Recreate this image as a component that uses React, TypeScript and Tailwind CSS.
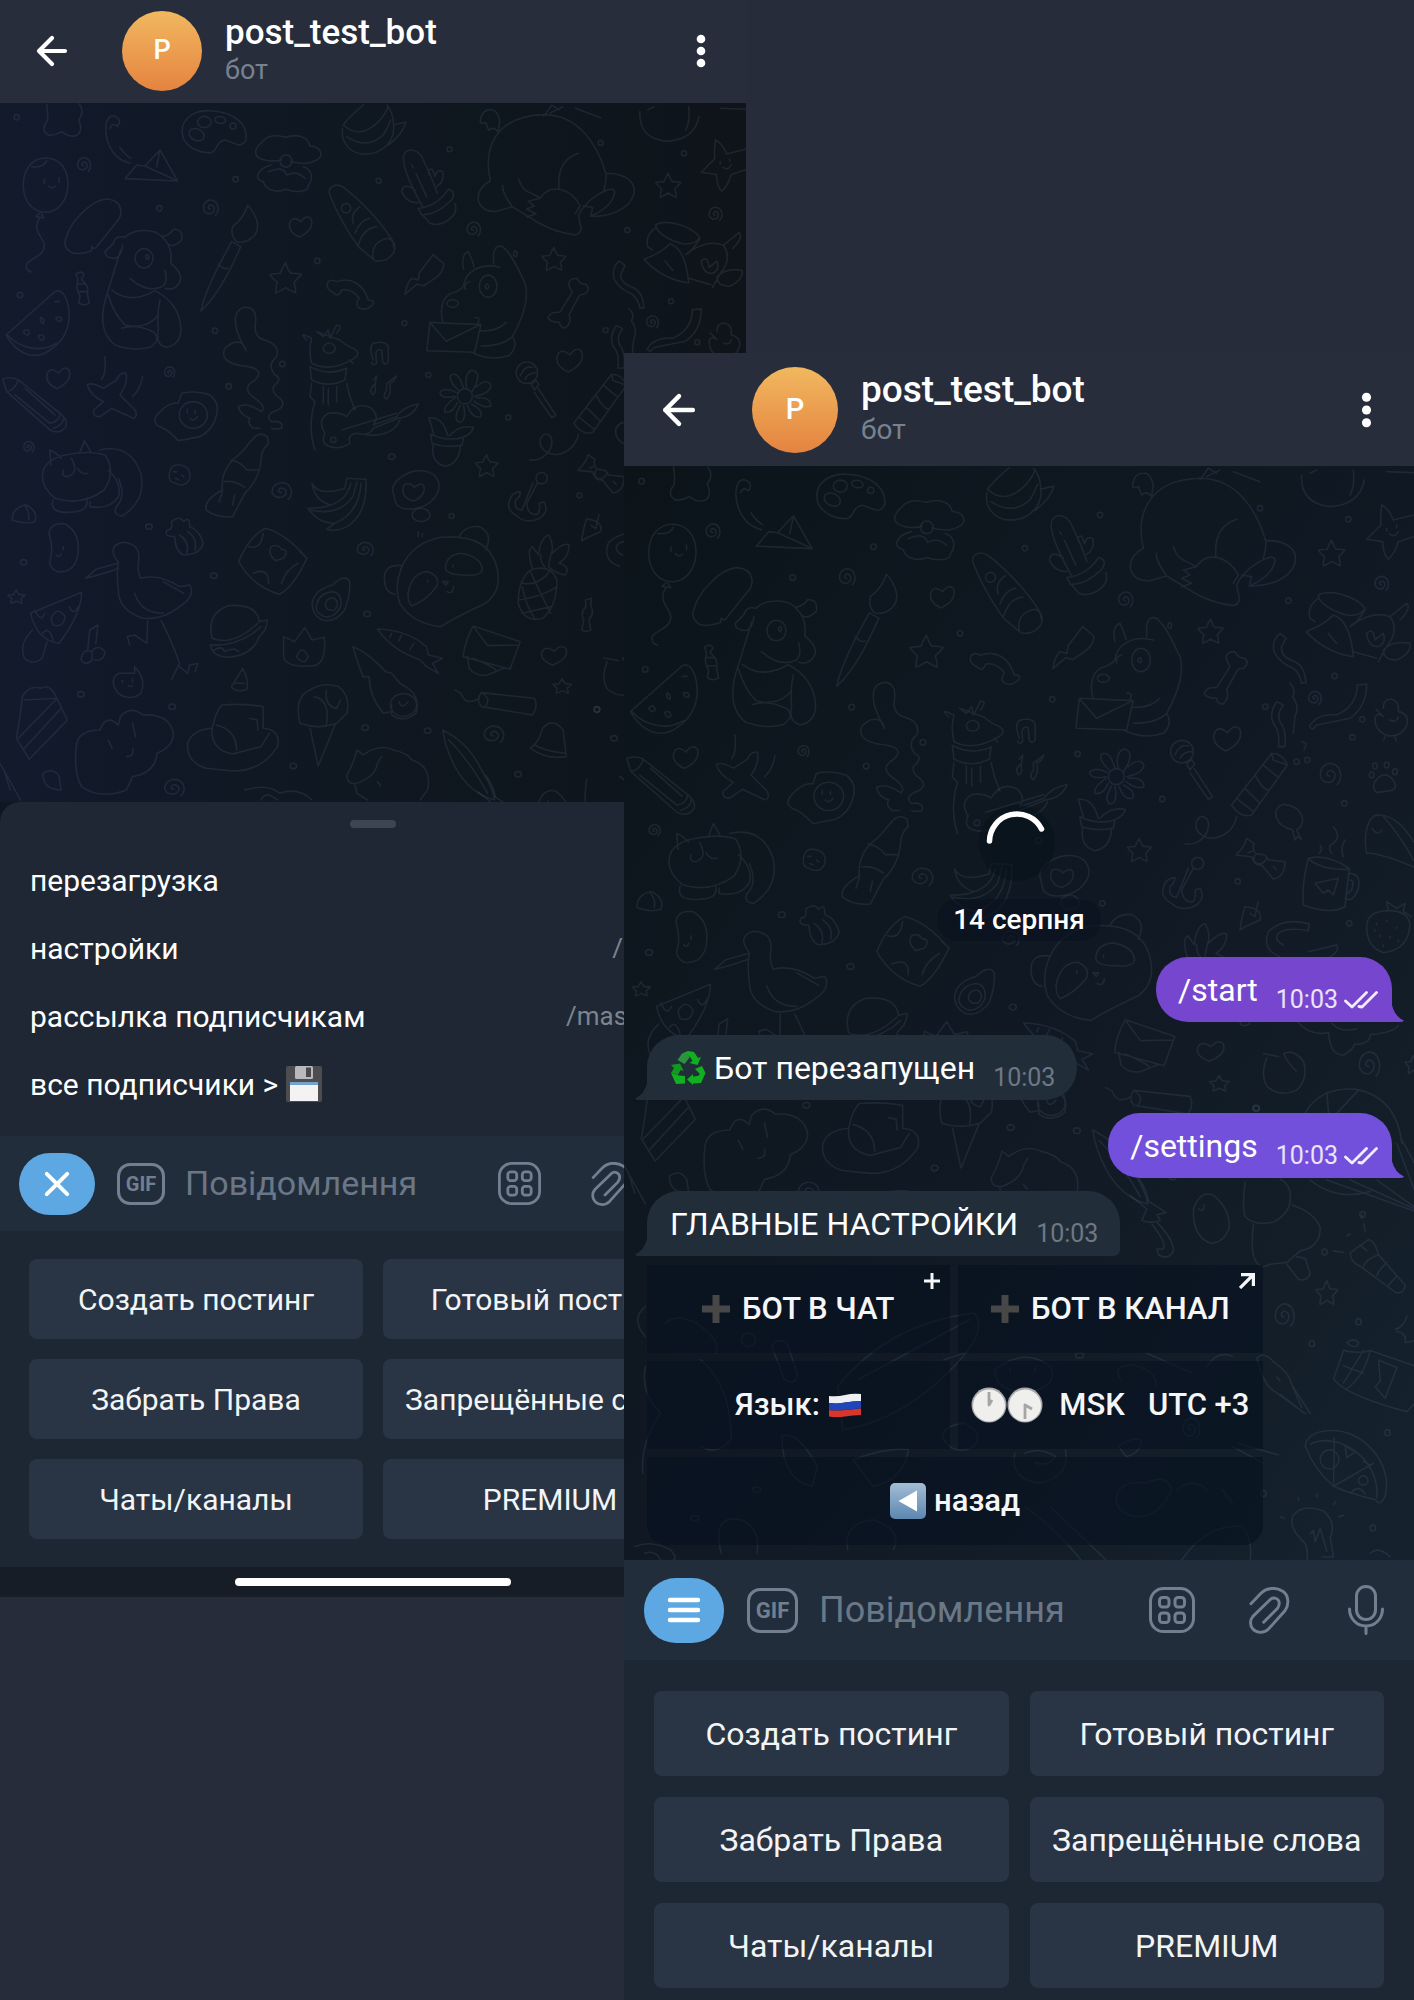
import React from "react";

type Size = "compact" | "large";

/* ---------- wallpaper ---------- */

type Spot = [number, number, number];

const STAR = "M0-1 Q.16-.5.32-.36 Q.7-.38.95-.3 Q.7 0 .5.18 Q.62.5.6.82 Q.25.66 0 .5 Q-.3.72-.6.82 Q-.6.45-.5.18 Q-.8-.05-.95-.3 Q-.6-.34-.32-.36 Q-.2-.7 0-1Z";
const HEART = "M-.1.95 Q-1.1.5-.95-.25 Q-.7-.95.02-.35 Q.5-1.05.9-.6 Q1.2.3-.1.95Z";
const SPIRAL = "M.05.1 Q-.3.05-.15-.25 Q.15-.55.45-.15 Q.6.35.1.6 Q-.55.7-.75.1 Q-.8-.7-.05-.95 Q.85-1 .95 0 Q.95.5.65.8";

function Shapes({ d, spots }: { d: string; spots: Spot[] }) {
  return (
    <>
      {spots.map(([x, y, r], i) => (
        <path key={i} d={d} transform={`translate(${x} ${y}) scale(${r})`} />
      ))}
    </>
  );
}

function Dots({ at }: { at: [number, number][] }) {
  return (
    <>
      {at.map(([x, y], i) => (
        <circle key={i} cx={x} cy={y} r={8} />
      ))}
    </>
  );
}

function Lines({ d }: { d: string[] }) {
  return (
    <>
      {d.map((p, i) => (
        <path key={i} d={p} />
      ))}
    </>
  );
}

const TOP_LEFT = [
  // puppy patch, balloon
  "M140 12 Q145 40 142 62 Q120 90 145 105 Q165 108 185 95 Q210 115 232 105 Q250 90 236 60 Q255 35 238 12",
  "M137 174 C180 174 205 210 204 255 C203 300 175 337 137 337 C95 337 70 300 70 255 C70 210 95 174 137 174Z M95 200 Q130 205 140 182 M118 340 l-10 10 l24 4 l-8-14 M118 355 C90 400 145 415 130 450 C120 475 70 480 80 505 Q85 515 95 516 M133 237 v14 M177 233 v14 M146 258 Q158 270 165 258",
  // paper plane
  "M330 85 C335 70 345 72 352 79 C370 60 345 40 328 52 C305 75 315 170 390 190 M375 236 L410 195 L435 198 L480 150 L533 243 Z M435 198 L533 243 M480 150 L470 200 M360 142 Q375 165 393 175",
  // palette
  "M640 33 C570 25 535 70 550 115 C565 145 600 160 632 158 C655 152 645 125 675 120 C700 125 722 150 738 120 C745 70 700 38 640 33Z M593 66 a20 17 0 1 0 40 0 a20 17 0 1 0-40 0 M568 104 a22 16 25 1 0 44 0 a22 16 25 1 0-44 0 M645 60 a16 10 10 1 0 32 0 a16 10 10 1 0-32 0 M690 78 a9 9 0 1 0 18 0 a9 9 0 1 0-18 0",
  // pansy
  "M858 165 a18 18 0 1 0 .1 0 M845 180 C800 190 760 175 768 150 C775 130 785 130 790 122 C810 100 840 108 858 112 C890 100 925 110 930 138 C965 140 975 170 945 182 C925 195 900 190 872 185 M815 195 C770 205 760 240 790 245 C800 275 835 278 858 268 C890 280 925 275 925 258 C945 230 930 205 910 200 M805 215 Q850 195 860 225 Q890 210 915 235",
  // helmet
  "M1090 15 C1060 40 1040 60 1030 75 Q1070 110 1110 85 Q1150 60 1165 20 M1028 85 C1020 135 1060 165 1100 162 C1150 160 1190 120 1180 65 Q1178 35 1160 15 M1040 110 Q1100 150 1150 105 Q1165 80 1172 60 M1180 75 Q1200 70 1218 66 Q1210 100 1165 135",
  // caterpillar pen
  "M990 285 C980 260 1010 245 1035 265 C1080 300 1140 360 1180 425 Q1190 440 1180 460 Q1160 488 1125 482 L1075 440 C1040 390 1010 340 990 285Z M1025 320 a14 14 0 1 0 20-8 a14 14 0 0 0-20 8 M1060 370 Q1050 340 1080 320 M1065 400 Q1080 360 1110 355 M1075 435 Q1090 385 1130 380 M1120 478 Q1110 425 1165 415 Q1185 425 1180 440",
  // cactus
  "M1268 320 C1240 270 1200 190 1213 162 C1225 140 1260 150 1270 180 Q1295 230 1312 280 M1288 225 Q1282 205 1297 208 L1305 230 Q1310 205 1328 215 Q1335 245 1310 260 M1245 270 Q1210 245 1205 275 Q1220 310 1255 308 M1255 325 Q1310 320 1345 268 Q1370 275 1355 300 Q1310 345 1265 345Z M1270 348 L1290 370 Q1315 380 1345 360 Q1375 340 1365 310 M1248 220 L1280 290 M1235 195 l4 8",
  // elephant dog
  "M200 410 C210 370 270 300 320 297 C370 300 370 345 350 365 L290 440 Q285 450 275 440 L275 452 Q240 465 215 458 Q185 440 200 410Z M375 412 C400 385 465 385 485 410 Q520 440 512 490 Q550 520 540 545 Q525 575 495 565 M375 412 Q345 405 340 430 L315 455 Q315 475 345 475 Q365 470 368 435 M362 450 L325 570 C300 640 300 700 345 735 Q400 755 450 742 Q485 720 462 697 Q410 670 365 685 M485 410 Q510 405 520 388 Q550 385 545 420 Q520 445 505 432 M405 475 a27 29 0 1 0 54 0 a27 29 0 1 0-54 0 M437 468 q8-10 10 4 q-6 14-10-4 M390 535 Q440 580 485 560 Q505 550 495 510 M335 570 Q390 615 465 572 Q540 610 543 690 Q540 735 500 742 Q465 735 475 690 Q470 640 480 600 M325 585 Q340 640 375 675 Q440 690 475 645",
  // brush
  "M743 315 C770 345 785 385 760 410 Q735 432 710 425 Q690 405 698 380 Q735 350 743 315Z M695 425 L722 440 C700 490 660 580 603 633 C615 570 660 490 695 425Z M655 492 Q670 510 685 505",
  // candy, watermelon
  "M228 522 q18-12 24 2 l-8 14 Q270 560 262 580 L268 610 Q250 620 236 608 L240 588 Q225 565 234 540Z M234 552 h22 M238 575 h24 M18 705 L165 575 Q185 565 200 600 C220 660 200 720 150 750 C100 785 50 760 18 705Z M22 705 C60 745 120 760 170 730 M122 652 q12 4 8 18 q-12-2-8-18 M70 695 q16-15 18 6 q-10 10-18-6 M115 708 q14-10 18 8 q-10 14-18-8 M168 652 q20-4 16 10 q-14 6-16-10 M165 605 h14",
  // curved bone
  "M983 548 Q990 535 1010 545 C1050 530 1090 550 1105 600 Q1130 600 1115 618 Q1095 635 1075 622 Q1065 610 1078 595 Q1055 565 1025 570 Q1015 595 1000 578 Q975 565 983 548Z",
  // bolt
  "M1300 464 L1332 492 Q1330 520 1300 538 L1270 558 L1252 552 L1215 583 Q1220 550 1235 535 L1255 540 L1258 518 Z",
  // ribbon
  "M738 752 Q720 720 710 690 Q695 625 740 622 Q775 625 765 680 Q765 715 800 722 Q840 735 830 770 Q800 795 825 825 Q850 835 820 860 Q815 880 840 895 Q865 920 820 935 Q795 950 815 965 Q850 960 845 985 Q830 990 815 985 M738 752 Q730 720 700 728 Q660 745 675 775 Q690 795 745 800 Q795 810 765 840 Q720 865 765 895 Q800 920 785 935 Q740 905 715 920 Q720 945 750 955 M750 955 Q740 970 760 985 L780 985",
  // llama
  "M920 720 Q900 700 915 706 L935 715 Q925 750 935 790 Q985 815 1045 785 Q1090 765 1065 748 Q1035 735 1020 720 L950 695 L970 710 L985 690 L990 715 L1010 675 Q1030 675 1010 700 M930 800 Q985 830 1040 805 L1035 840 Q985 865 935 840Z M935 850 L930 890 L945 905 C925 970 935 1020 945 1050 M1040 850 L1050 890 L1065 930 M970 860 L970 910 M985 865 V915 M1010 860 V905 M970 745 a18 15 0 1 0 36 0 a18 15 0 1 0-36 0 M1050 780 l8 10",
  // guitar
  "M985 940 Q1020 935 1040 950 Q1070 900 1115 925 Q1140 950 1120 975 L1190 950 Q1210 920 1255 912 Q1240 950 1195 955 L1120 985 Q1110 1010 1070 1000 Q1040 1005 1050 1030 Q1020 1050 990 1040 Q960 1030 975 1000 Q950 960 985 940Z M1025 990 L1190 940 M1200 960 Q1180 1010 1100 1005",
  // notes
  "M1120 780 Q1105 740 1120 730 Q1155 720 1165 740 L1165 785 Q1155 800 1148 785 L1145 750 Q1125 745 1128 770 L1130 790Q1120 800 1115 788 M1120 840 l10-12 l-5 30 Q1130 880 1118 884 Q1105 870 1122 855 M1160 850 L1190 828 L1180 845 L1170 850 Q1175 880 1160 898 Q1145 890 1160 870Z",
  // pencil
  "M8 838 Q30 828 55 840 L180 940 Q205 960 198 980 Q180 1005 150 990 L20 875Z M20 875 Q45 870 55 840 M45 885 L150 970 M150 970 Q180 965 180 940 M160 985 Q190 975 190 955 M75 865 L165 945",
  // plane
  "M262 855 Q275 845 310 865 L350 840 Q360 815 378 820 Q385 850 360 885 L405 930 Q415 950 400 955 L335 925 L300 950 Q275 950 282 930 L310 905 Q270 885 262 855Z M305 838 Q320 820 314 770 M398 890 Q420 870 428 830",
  // fried egg
  "M545 880 Q590 870 630 885 Q660 910 650 945 Q640 990 600 1010 Q550 1020 535 1022 Q500 985 478 980 Q450 965 480 935 Q510 905 535 910 Z M538 945 a42 40 0 1 0 84 0 a42 40 0 1 0-84 0 M562 928 v10 M585 930 v10 M570 955 q12 12 22-5",
];

const TOP_RIGHT = [
  // elephant
  "M430 265 C410 180 430 60 600 55 C710 55 770 150 797 242 C860 240 895 270 885 310 C870 360 800 380 748 378 L755 350 L725 345 M430 265 Q385 290 392 330 Q405 365 450 362 L500 348 C480 320 465 290 470 280 M500 348 L545 375 L585 400 Q640 430 700 437 Q725 430 715 400 L710 375 Q725 340 770 310 Q820 280 825 300 Q820 345 755 375 M790 295 Q800 260 797 242 M710 178 Q640 200 648 290 M520 260 Q530 295 560 305 L590 320 Q610 285 655 293 Q695 305 715 345 L700 370 M545 380 L575 370 L545 355 L570 345 L550 330 L590 320 M455 110 L460 75 Q450 35 430 40 Q400 40 398 80 Q410 85 415 80 L425 105 Q440 90 455 110 M600 60 L625 25 L650 40 M620 50 L660 30 M700 35 L780 65",
  // sugar bowl
  "M905 45 Q900 130 990 140 Q1080 135 1093 60 M1060 30 Q1065 80 1050 105 M930 40 l20-10 M1160 35 L1240 38",
  // starfish
  "M1145 135 Q1170 150 1180 180 L1240 165 M1145 135 Q1140 180 1143 195 L1100 238 L1148 245 Q1150 285 1165 298 Q1185 280 1195 245 L1240 230 M1160 205 v8 M1190 195 v8 M1168 222 Q1185 235 1195 215",
  // pot
  "M955 405 C990 385 1070 410 1095 445 Q1080 470 1040 465 C1000 455 955 430 955 405Z M955 415 Q920 440 930 475 L945 485 M1095 450 Q1070 490 1050 500 M918 515 Q980 490 1000 465 Q1050 480 1060 590 Q980 580 918 515Z M1055 495 Q1120 450 1170 470 Q1200 510 1160 560 L1135 605 M1170 470 L1220 430 Q1235 445 1200 480 M1100 520 Q1120 500 1125 540 L1150 520 Q1160 550 1135 560 Q1105 560 1100 520 M1150 570 Q1180 540 1230 550 Q1235 580 1190 600 Q1150 600 1150 570 M985 520 Q1000 540 1010 550 M1060 575 L1130 595",
  // dino with letter
  "M460 540 C405 525 350 550 345 600 Q335 615 300 625 Q265 650 278 712 M440 500 Q445 465 470 475 C500 500 520 550 540 590 C560 660 510 740 500 760 Q470 790 400 790 M345 545 Q335 500 360 490 Q375 520 378 540 M440 500 L440 530 M395 600 a28 35 0 1 0 56 0 a28 35 0 1 0-56 0 M413 600 q8-15 12 2 q-6 14-12-2 M350 610 Q345 590 365 585 M292 655 a18 12 0 1 0 36 0 a18 12 0 1 0-36 0 M238 715 L400 722 L380 810 L228 805 Z M240 718 L290 775 L398 722 M380 700 q20-4 10 20 M400 742 Q450 745 480 715 M500 760 Q520 790 490 820 Q430 840 370 810 M507 488 q12 0 5 18 q-14 0-5-18",
  // bone
  "M680 600 Q675 575 705 575 Q715 595 735 595 Q750 610 730 625 Q715 625 710 635 L680 690 Q690 715 668 733 Q650 730 650 715 Q620 715 613 700 Q620 680 650 683 L690 620Z",
  // streamers
  "M840 520 Q815 540 822 575 Q840 610 880 625 Q900 640 905 670 L918 668 Q915 620 885 605 Q840 590 845 560 L858 535Z M870 670 Q890 690 878 710 Q900 740 885 770 L880 820 M928 800 Q950 760 1010 765 Q1070 740 1072 675 L1100 672 Q1100 740 1050 775 L950 795 L938 808Z M830 725 Q800 770 830 805 Q840 830 835 860 L855 860 Q860 810 840 785 Q830 760 850 735Z",
  // duckling
  "M1150 745 Q1150 715 1175 718 Q1200 725 1195 755 Q1225 760 1222 790 Q1210 830 1165 828 Q1125 815 1125 775 Q1130 755 1150 770 L1128 748 M1155 830 l-4 10 M1185 830 l4 12 M1170 780 Q1190 790 1195 770",
  // flower and pot
  "M325 950 a24 24 0 1 0 48 0 a24 24 0 1 0-48 0 M355 925 Q345 880 370 867 Q400 870 385 910 L372 935 M385 920 Q420 890 432 915 Q430 940 380 950 M385 955 Q430 950 432 980 Q410 990 378 965 M370 975 Q410 995 398 1015 Q370 1020 358 980 M345 980 Q355 1030 330 1032 Q310 1020 335 978 M325 970 Q310 1005 285 1000 Q280 980 318 955 M318 950 Q270 960 270 935 Q290 920 322 938 M328 930 Q295 900 305 882 Q330 870 345 925 M250 1070 L235 1018 Q275 1015 290 1060 L295 1075 M300 1075 Q330 1040 376 1048 Q370 1075 325 1085 M240 1070 Q290 1095 345 1080 L340 1105 Q290 1115 245 1100Z M248 1105 Q240 1160 285 1172 Q330 1165 335 1108",
  // lollipop
  "M512 875 a34 34 0 1 0 68 0 a34 34 0 1 0-68 0 M525 885 Q540 850 565 858 M540 895 Q550 875 575 875 M560 912 l14-14 l10 14 l-14 18Z M582 925 L638 1010 L625 1018 L570 938",
  // firecracker
  "M815 880 Q850 880 862 915 L755 1065 Q720 1075 695 1035Z M815 880 L820 900 L862 915 M790 915 Q830 950 835 950 M765 945 Q790 990 805 990 M735 985 L780 1030 M710 1015 L760 1055 M710 1070 C700 1120 650 1145 615 1130 C570 1110 590 1065 610 1070 C645 1080 620 1160 555 1152 M905 845 l15 5 l-8 20",
  // mouse, paw
  "M830 1075 Q820 1045 850 1033 Q890 1035 905 1065 Q915 1095 890 1110 L905 1140 L895 1128 L885 1140 L878 1110 Q840 1100 830 1075Z M1125 965 Q1150 930 1175 955 Q1200 985 1170 992 L1130 998 Q1115 985 1125 965Z M1108 945 a7 9 0 1 0 14 0 a7 9 0 1 0-14 0 M1118 918 a7 9 0 1 0 14 0 a7 9 0 1 0-14 0 M1153 915 a7 9 0 1 0 14 0 a7 9 0 1 0-14 0 M1178 935 a7 9 0 1 0 14 0 a7 9 0 1 0-14 0",
  // bow
  "M740 1135 L762 1150 Q755 1170 770 1182 Q800 1180 805 1200 L855 1205 Q855 1250 820 1257 L785 1215 Q765 1220 755 1190 L708 1185 Q735 1160 740 1135Z M765 1185 Q755 1210 780 1212 Q800 1205 800 1190 M745 1178 l12-5 M820 1220 l10 10",
  // mug
  "M925 1195 Q980 1180 1048 1225 L1035 1340 Q990 1365 910 1335 Q905 1270 925 1195Z M925 1195 Q960 1230 1045 1228 M1045 1240 Q1085 1240 1075 1285 Q1060 1330 1035 1315 M1050 1260 Q1065 1260 1055 1290 L1042 1300 M945 1270 L1015 1255 L1000 1305 L985 1290 L970 1300Z M960 1155 q10 10-2 25 M1000 1100 Q1025 1130 1000 1150 Q980 1160 995 1180 M1035 1140 Q1020 1165 1030 1190",
  // cap
  "M1100 1180 C1090 1130 1100 1060 1140 1065 C1190 1070 1220 1110 1240 1145 M1100 1180 Q1130 1175 1240 1220 M1150 1068 Q1210 1140 1240 1200 M1115 1105 q20 25 30 5",
  // egg heart
  "M120 1250 C115 1220 170 1180 220 1187 C270 1195 280 1240 250 1275 C220 1310 150 1320 130 1290Z",
  // anchor
  "M575 1210 a18 18 0 1 1 36 0 a18 18 0 1 1-36 0 M580 1225 L545 1290 Q550 1330 580 1325 Q590 1310 585 1290 L600 1285 Q620 1320 580 1340 Q540 1355 515 1330 Q480 1310 490 1285 Q495 1255 525 1252 Q525 1270 510 1280 Q505 1310 530 1312 L565 1225",
  // leaf, strawberry
  "M735 1340 Q790 1345 780 1380 L735 1400 L720 1410 Q725 1370 735 1340Z M750 1360 L765 1370 L775 1325 M1100 1400 Q1100 1355 1160 1352 Q1225 1350 1230 1395 Q1225 1470 1150 1478 Q1100 1460 1100 1400Z M1165 1350 L1160 1325 L1190 1345 L1215 1330 L1210 1355 L1235 1370 M1130 1390 v5 M1160 1380 v5 M1190 1400 v5 M1140 1425 v5 M1170 1430 v5 M1195 1440 v5 M1150 1455 v5 M1125 1410 v4",
  // magnet
  "M928 1392 Q850 1370 805 1415 Q785 1470 840 1490 M925 1412 Q860 1400 835 1420 Q820 1440 850 1455 M925 1475 L1010 1455 Q1020 1475 990 1490 M928 1392 L925 1412",
];

const MIDDLE = [
  // cat
  "M160 165 Q220 150 258 165 Q285 215 255 270 Q200 320 135 295 Q90 250 110 200 Q130 170 160 165Z M125 195 L122 150 Q140 160 150 175 M195 160 L207 122 L222 155 M245 150 Q320 130 345 220 Q360 300 300 348 Q275 345 285 320 Q310 290 290 235 M265 210 Q300 250 290 290 Q270 330 220 320 L220 305 M130 300 Q120 340 170 337 Q220 335 212 300 M175 175 Q195 220 165 230 Q150 230 155 210 M190 205 Q200 225 215 220",
  // bottle
  "M625 110 Q640 95 655 110 L658 130 Q640 150 640 180 Q635 240 600 280 L570 350 Q530 355 505 330 Q500 300 545 270 Q540 220 570 180 Q600 150 610 130Z M565 180 Q590 185 605 210 L635 210 M550 245 Q575 240 600 262 M545 275 l-8 30 M575 285 l-5 30",
  "M415 225 Q418 190 440 195 Q470 200 465 235 Q455 265 430 250 Q412 245 415 225Z M425 215 h8 M445 225 l6 6 M430 235 l8 4",
  // acorns and peanut
  "M30 360 Q30 320 65 315 Q95 335 85 365 Q60 375 30 360Z M60 315 Q75 340 70 360 M120 400 Q125 365 160 372 Q200 400 190 470 Q180 520 140 515 Q115 500 125 470 Q130 440 120 400Z M155 440 v10 M138 465 q8 10 12-4",
  // cupcake
  "M428 410 Q400 410 410 390 Q425 390 420 365 Q440 345 450 365 Q465 345 465 380 Q490 390 498 430 Q490 465 450 465 Q430 455 428 410Z M460 395 Q485 415 478 450 M440 405 Q465 425 458 460",
  // pillow
  "M650 385 Q700 400 752 475 Q720 560 685 583 Q620 560 585 485 Q610 410 650 385Z M610 440 Q640 450 645 400 M665 440 Q680 430 690 448 Q710 450 695 475 L675 482 Q655 460 665 440Z M620 520 Q660 500 658 550 M690 550 Q700 510 730 490 M735 455 l18 20",
  // bananas
  "M765 250 Q780 290 845 265 L850 235 L897 238 Q900 320 870 360 Q840 400 800 388 L820 370 Q780 370 755 325 Q790 325 810 315 Q770 300 765 250Z M760 330 Q830 350 865 290 L875 245 M820 370 Q880 340 885 250 M810 315 Q850 300 860 250",
  // fried heart
  "M990 255 Q1005 245 1015 262 Q1040 240 1040 270 Q1035 295 1012 303 Q980 290 990 255Z M1010 345 a22 20 0 1 0 44 0 a22 20 0 1 0-44 0 M1025 395 v15 M1035 400 v10",
  // stork
  "M290 487 Q260 440 300 427 Q345 430 340 480 Q335 510 345 535 Q390 520 440 560 L465 555 Q480 590 440 620 Q400 660 350 655 Q290 630 290 570 Q285 520 290 487Z M288 490 L235 508 L210 535 Q260 520 290 505 M330 580 Q345 640 400 640 M400 545 L450 580 M362 662 L360 730 L330 705 L312 710 L318 735 M395 662 Q420 720 440 790 L420 840 M440 800 L460 820 L465 795 L485 790 L478 815",
  // panda
  "M985 500 Q1010 430 1080 412 Q1190 400 1215 490 Q1235 570 1190 610 Q1120 650 1080 680 Q1010 670 980 610 Q965 560 985 500Z M1125 410 Q1140 375 1175 380 Q1210 400 1190 450 M985 497 Q940 490 942 540 Q945 580 968 583 M1092 500 Q1095 465 1130 460 Q1180 470 1182 510 Q1175 530 1140 525 Q1090 525 1092 500Z M1000 580 Q1010 515 1050 515 Q1080 530 1070 560 Q1045 600 1010 618 Q1000 610 1000 580Z M1110 495 v6 M1048 540 v6 M1085 545 h14 l-6 10Z M1095 575 Q1110 585 1112 560",
  // pineapple
  "M1300 510 Q1350 490 1365 540 Q1365 620 1330 655 Q1285 670 1270 610 Q1270 540 1300 510Z M1280 550 Q1320 560 1350 510 M1270 600 Q1330 590 1365 560 M1280 640 L1350 620 M1300 515 Q1320 570 1350 640 M1280 560 Q1290 620 1310 655 M1305 505 Q1290 450 1305 440 L1320 465 Q1325 410 1345 405 Q1360 440 1350 465 Q1380 425 1395 435 Q1395 470 1370 490 Q1400 500 1385 525 Q1360 520 1345 500 M1325 465 Q1325 490 1335 500 M1350 465 L1345 495",
  // avocado
  "M765 610 Q770 570 815 555 Q845 520 857 545 Q860 580 845 630 Q820 670 790 660 Q765 645 765 610Z M775 620 Q780 580 815 575 Q840 580 835 620 Q820 655 795 650 Q775 640 775 620Z M797 615 Q800 590 820 595 Q835 610 820 630 Q800 635 797 615Z",
  // pizza, mushroom, cherry
  "M75 640 L200 577 Q200 640 145 730 Q90 720 75 640Z M85 630 Q100 670 110 640 M125 655 Q140 615 160 650 Q155 685 130 675 Z M170 620 Q180 650 192 620 M105 700 Q120 675 130 720 M80 690 Q45 730 60 775 Q85 800 105 770 L115 725 M200 770 Q205 745 225 755 Q230 790 210 790 Q195 785 200 770Z M225 755 Q240 730 257 755 Q255 785 230 780 M215 750 L220 690 L240 675 L235 730",
  // burger, tulip, carrots
  "M520 715 Q505 640 560 617 Q630 610 635 665 L655 660 Q655 690 635 710 Q620 765 560 772 Q520 770 515 735 Q570 740 620 700 L640 680 M520 715 Q570 740 632 670 M525 750 Q545 735 550 755 Q575 740 585 755 M695 710 L722 725 L747 683 L765 720 L795 712 Q800 790 770 797 Q700 805 695 770Z M727 770 Q740 730 755 770 Q745 800 727 770Z M925 687 Q1000 690 1045 740 L1050 765 L1085 775 L1060 790 L1075 820 L1045 800 L1030 780 Q960 750 925 687Z M960 700 l-5 12 M985 705 l-8 18 M1015 730 l-10 18",
  "M865 740 Q900 755 945 815 L960 820 L980 850 L1000 865 Q1030 890 1020 940 Q990 970 960 945 L960 915 M865 740 Q880 800 890 830 L905 830 Q905 890 940 940 L960 935 M957 915 a32 34 0 1 0 64 0 a32 34 0 1 0-64 0 M978 905 q6 25 22 0",
  // envelope
  "M1160 678 L1275 725 L1250 808 L1135 770 Q1140 720 1160 678Z M1160 678 L1195 737 L1272 735 M1145 770 L1150 805 Q1165 830 1195 825 L1235 805 M1160 775 Q1200 795 1215 810",
  // dynamite
  "M1180 878 L1310 895 Q1320 920 1305 945 L1180 920 Q1165 900 1180 878Z M1180 878 Q1205 895 1190 920 M1175 895 Q1140 920 1130 880 L1115 870",
  "M330 800 Q360 840 345 880 Q320 905 290 880 Q265 840 290 820 L330 820Z M300 840 v8 M325 838 v8 M315 858 h10 M595 805 Q610 840 605 868 Q580 880 567 860Z M575 850 h24",
  // cake slice
  "M55 890 Q70 855 100 865 Q120 850 135 885 L165 960 L72 1078 L40 1015 Q50 950 55 890Z M60 900 L140 895 M140 895 L45 1015 M150 925 L60 1045",
  // popcorn sheep
  "M245 990 Q190 990 187 1040 Q180 1120 200 1160 Q245 1200 310 1170 L325 1130 Q380 1120 385 1060 Q425 1040 425 1000 Q415 940 350 945 Q320 915 295 950 L290 975 Q260 940 245 990Z M265 1020 L275 1045 M325 970 L332 1010 M310 1070 Q330 1070 325 1045",
  // bear in a cup
  "M520 985 Q530 930 545 915 Q595 910 645 920 L645 985 Q690 990 680 1040 Q640 1115 570 1113 L505 1105 Q455 1085 460 1030 Q470 990 520 985Z M520 985 Q515 1050 570 1062 L640 1040 L660 1000 M530 975 Q580 990 580 1050 M612 955 L630 960 L632 990",
  // ice cream
  "M735 970 Q720 890 760 870 Q790 845 830 860 Q860 890 850 940 L825 970 Q780 990 735 970Z M760 985 L780 1098 L822 972 M770 890 Q810 900 800 975 M800 870 Q795 920 825 925 L835 900",
  // pony
  "M850 1125 Q865 1095 875 1050 L890 1065 Q930 1030 965 1050 Q1000 1060 1010 1080 Q1060 1100 1048 1170 L1030 1200 M850 1125 Q850 1155 875 1150 Q920 1130 925 1090 L935 1070 M870 1155 L875 1180 L900 1200 M925 1145 l8 12",
  // feather, bell
  "M1085 990 Q1150 1030 1180 1110 Q1210 1170 1212 1200 Q1150 1180 1115 1100 Q1090 1040 1085 990Z M1100 1020 Q1150 1080 1195 1180 M1300 1045 Q1320 1030 1330 985 Q1355 950 1380 990 L1388 1070 Q1340 1080 1300 1045Z M1310 1035 Q1340 1055 1385 1060",
  "M1435 600 l15-5 l-2 20 q10 25-5 45 l5 30 q-12 8-22 0 l5-30 q-10-20 5-40Z M105 1120 Q130 1100 145 1130 L150 1170 Q105 1170 105 1120Z M600 1170 Q660 1150 685 1180 Q730 1160 765 1200 M640 1200 Q650 1170 680 1200 M0 1090 L50 1200 M10 1110 L25 1170",
];

const LOWER_RIGHT = [
  // peach
  "M410 255 Q390 300 410 330 Q450 360 500 340 Q535 310 520 265 Q490 230 460 245 Q470 265 498 290 M400 245 L445 252",
  "M500 160 Q540 200 595 190 Q600 250 640 248 Q670 235 672 220 Q720 220 720 195 Q790 190 805 170 M605 165 Q630 190 680 180",
  // beach ball and rays
  "M525 400 Q570 330 680 338 Q800 360 815 480 M590 345 L595 400 M620 400 L685 340 M540 575 Q620 630 720 605 M815 470 L852 530 M590 575 L850 655 M660 575 L852 650 M740 575 L852 645 M800 480 L852 600",
  // umbrella, egg
  "M25 570 Q50 600 55 630 L108 660 L80 665 L90 680 Q60 690 35 680 L50 650 L0 615 M80 685 Q130 730 130 760 Q115 785 85 770 L80 755 L100 755 Q110 740 65 690 M190 650 Q210 600 250 615 Q300 650 297 700 Q280 740 240 740 Q185 720 190 650Z M205 650 q15 12 18-10",
  // ice pop
  "M345 580 Q335 650 345 670 Q370 695 430 685 Q480 660 480 625 Q485 590 450 572 M370 690 Q360 760 375 785 Q390 810 420 795 L470 790 L510 760 Q570 750 570 700 Q555 660 485 640 M470 795 L505 835 Q530 840 540 820 L525 780 L500 775",
  // flashlight
  "M660 765 L715 730 Q735 735 745 770 L825 850 Q820 875 795 868 L690 800 Q660 790 660 765Z M690 745 L710 760 M745 770 Q710 780 700 800 M770 790 Q745 810 740 825 M800 825 L775 850 M695 665 v8 M700 690 l5 18 M650 720 l10-4 M610 760 l30 4",
  // chocolate
  "M640 1020 Q690 1030 720 1020 L852 1060 M640 1020 L610 1095 Q650 1140 830 1180 L852 1160 M720 1020 Q700 1090 650 1120 M700 1020 L640 1105 M640 1060 L700 1080 M745 1045 L800 1065 L765 1145 L735 1115 L750 1100Z",
  // squid
  "M380 1040 Q400 1020 430 1050 Q480 1080 485 1110 L540 1185 M380 1040 Q400 1110 430 1125 L525 1185 M485 1110 L515 1170 M450 1135 L495 1165 M440 1090 l10 10",
  // pizza
  "M525 1270 Q530 1235 590 1230 C700 1220 790 1320 765 1400 Q750 1430 735 1410 Q660 1395 610 1375 Q550 1330 525 1270Z M540 1265 C620 1230 750 1300 740 1405 M612 1250 L610 1375 L730 1315 M570 1305 a28 25 0 1 0 56 0 a28 25 0 1 0-56 0 M645 1270 L675 1285 L650 1300Z M685 1360 a14 12 0 1 0 28 0 a14 12 0 1 0-28 0 M700 1310 l20 10 M665 1390 q20-20 40 5",
  // lamp
  "M525 1525 Q470 1480 490 1450 Q520 1420 580 1440 Q620 1470 600 1510 L610 1560 L575 1560 M525 1525 Q535 1545 530 1568 M540 1500 L550 1490 L555 1520 L570 1485 L590 1545 M505 1405 v8 M560 1395 v8 M615 1415 l-5 8 M450 1455 l12 4 M625 1455 l14-4",
  "M795 965 Q820 960 830 930 M800 970 Q830 975 825 1000 L852 995 M650 1000 q20-15 36 0 q-10 20-36 0 M720 1550 Q745 1530 780 1560",
];

const LOWER_LEFT = [
  "M90 430 Q110 400 150 430 Q200 480 190 520 M50 380 Q20 420 50 470 M50 560 Q40 640 80 700 Q40 790 45 880 M160 540 Q220 620 220 780 Q190 830 160 800",
  "M240 480 a14 20 0 1 0 28 0 a14 20 0 1 0-28 0 M300 500 L325 600 Q350 620 350 580 L330 490 Q310 470 300 500Z",
  "M430 620 Q530 430 700 400 Q730 450 660 560 Q560 720 440 750 Z M470 600 Q580 510 690 420 M640 540 L680 520",
  "M740 570 Q800 500 850 560 Q870 620 800 640 Q740 630 740 570Z M770 565 v12 M820 565 v12",
  "M320 770 Q350 750 390 860 L380 920 Q320 900 320 770Z M460 840 Q530 800 570 810 Q560 900 500 920Z",
  "M780 820 Q770 900 830 910 Q890 890 880 810 M800 820 Q830 800 860 830 Q850 860 820 850",
  "M640 780 Q630 740 680 730 Q720 760 700 800 Q660 830 640 780Z M985 800 Q1010 770 1030 780 Q1030 820 1000 830Z",
  "M990 600 Q970 560 1010 555 Q1060 570 1060 620 M1160 560 Q1180 510 1210 530 M1040 520 L1130 580 M1210 800 L1270 850 M1220 790 L1300 825",
  "M200 1120 Q180 1000 240 1020 Q280 1050 270 1120 M450 1110 Q440 1030 500 1020 Q560 1050 540 1110 M800 980 Q870 1060 910 1140 M850 980 L960 1140 M1110 1140 Q1160 1030 1230 1040 Q1250 1080 1245 1140",
  "M30 1100 Q60 1080 100 1110 Q115 1140 105 1140 M50 1120 Q70 1110 80 1140 M980 950 Q990 900 1040 910 Q1080 880 1090 930 Q1070 1000 1030 1010 Q980 1010 980 950Z M1100 930 Q1130 890 1160 930 M1190 930 l20 40",
];

function Wallpaper() {
  return (
    <svg
      aria-hidden="true"
      viewBox="0 0 746 1040"
      preserveAspectRatio="xMidYMin slice"
      className="absolute inset-x-0 top-0 h-auto w-full fill-none stroke-[#7990ad]/14 stroke-[1.6] [&_*]:[vector-effect:non-scaling-stroke]"
      strokeLinecap="round"
      strokeLinejoin="round"
    >
      <g transform="translate(0 -3) scale(.3333)">
        <Lines d={TOP_LEFT} />
        <Shapes d={SPIRAL} spots={[[250, 195, 23], [630, 325, 26], [507, 818, 18], [85, 1042, 18]]} />
        <Shapes d={HEART} spots={[[902, 378, 35], [175, 832, 36]]} />
        <Shapes d={STAR} spots={[[857, 538, 50]]} />
        <Dots at={[[478, 325], [707, 238], [952, 483], [645, 692], [847, 792], [686, 859], [60, 585], [50, 52], [1000, 1020]]} />
      </g>
      <g transform="translate(355 -5.7) scale(.3148)">
        <Lines d={TOP_RIGHT} />
        <Shapes d={STAR} spots={[[995, 283, 42], [632, 517, 40], [418, 1173, 38]]} />
        <Shapes d={SPIRAL} spots={[[375, 420, 25], [1143, 372, 24], [943, 715, 22], [988, 945, 36]]} />
        <Shapes d={HEART} spots={[[682, 833, 42]]} />
        <Dots at={[[865, 422], [780, 145], [1045, 178], [300, 165], [75, 265], [1004, 648], [1087, 778], [1057, 832], [1048, 1390], [487, 1017], [713, 1264], [307, 1330], [796, 740], [157, 718], [233, 882], [1033, 1030], [890, 905], [922, 900]]} />
      </g>
      <g transform="translate(0 297) scale(.408 .3333)">
        <Lines d={MIDDLE} />
        <Shapes d={SPIRAL} spots={[[688, 275, 28], [893, 449, 23], [425, 1165, 28], [1208, 1005, 28]]} />
        <Shapes d={STAR} spots={[[40, 592, 22], [1378, 860, 24]]} />
        <Shapes d={HEART} spots={[[1358, 765, 32]]} />
        <Dots at={[[365, 380], [58, 487], [524, 527], [900, 642], [198, 883], [422, 920], [895, 983], [1048, 992], [1463, 928], [719, 1098], [1270, 1123], [1505, 1015], [960, 170]]} />
      </g>
      <g transform="translate(478 466.5) scale(.3148 .3614)">
        <Lines d={LOWER_RIGHT} />
        <Shapes d={STAR} spots={[[590, 872, 34], [850, 275, 26]]} />
        <Shapes d={SPIRAL} spots={[[714, 275, 36], [460, 930, 33], [180, 1225, 30]]} />
        <Dots at={[[378, 388], [583, 763], [685, 945], [545, 1002], [772, 1235], [728, 1484], [400, 1394], [697, 665]]} />
      </g>
      <g transform="translate(-3.8 674) scale(.478 .3148)">
        <Lines d={LOWER_LEFT} />
        <Dots at={[[908, 527], [270, 930], [148, 1015]]} />
      </g>
    </svg>
  );
}

/* ---------- icons ---------- */

const line = "fill-none stroke-current";

function BackIcon({ className }: { className: string }) {
  return (
    <svg viewBox="0 0 32 32" className={`${line} ${className}`} strokeWidth="4.200" strokeLinecap="round" strokeLinejoin="round" aria-hidden="true">
      <path d="M29 16H3M16 3L3 16L16 29" />
    </svg>
  );
}

function DotsIcon({ className }: { className: string }) {
  return (
    <svg viewBox="0 0 10 34" className={`fill-current ${className}`} aria-hidden="true">
      <circle cx="5" cy="5" r="4.300" />
      <circle cx="5" cy="17" r="4.300" />
      <circle cx="5" cy="29" r="4.300" />
    </svg>
  );
}

function MenuIcon({ className }: { className: string }) {
  return (
    <svg viewBox="0 0 34 28" className={`${line} ${className}`} strokeWidth="4.400" strokeLinecap="round" aria-hidden="true">
      <path d="M3 4H31M3 14H31M3 24H31" />
    </svg>
  );
}

function CloseIcon({ className }: { className: string }) {
  return (
    <svg viewBox="0 0 28 28" className={`${line} ${className}`} strokeWidth="4.200" strokeLinecap="round" aria-hidden="true">
      <path d="M3 3L25 25M25 3L3 25" />
    </svg>
  );
}

function AppsIcon({ className }: { className: string }) {
  return (
    <svg viewBox="0 0 46 46" className={`${line} ${className}`} strokeWidth="3" aria-hidden="true">
      <rect x="1.500" y="1.500" width="43" height="43" rx="13" />
      <rect x="10.500" y="10.500" width="9.500" height="9.500" rx="3" />
      <rect x="26" y="10.500" width="9.500" height="9.500" rx="3" />
      <rect x="10.500" y="26" width="9.500" height="9.500" rx="3" />
      <rect x="26" y="26" width="9.500" height="9.500" rx="3" />
    </svg>
  );
}

function ClipIcon({ className }: { className: string }) {
  return (
    <svg viewBox="0 0 42 48" className={`${line} ${className}`} strokeWidth="3" strokeLinecap="round" aria-hidden="true">
      <path d="M2 17L12 6.500C19 -.5 29 .5 35 4.500C41 9 41 18 37 24L20 43C15.500 47.500 8 47.500 4 43C.5 39 1 33.500 4 30L22 12.500C25.500 9.500 31 12 31 16.500C31 19 30.500 20 29 22L15 36" />
    </svg>
  );
}

function MicIcon({ className }: { className: string }) {
  return (
    <svg viewBox="0 0 36 50" className={`${line} ${className}`} strokeWidth="3" strokeLinecap="round" aria-hidden="true">
      <rect x="8.500" y="1.500" width="19" height="33" rx="9.500" />
      <path d="M1.500 24C1.500 34 9 41 18 41S34.500 34 34.500 24M18 41V48.500" />
    </svg>
  );
}

function TicksIcon() {
  return (
    <svg viewBox="0 0 34 18" className="h-[18px] w-[34px] fill-none stroke-current" strokeWidth="2.800" strokeLinecap="round" strokeLinejoin="round" aria-label="прочитано">
      <path d="M1.500 10L8 16L22.500 1.500M15 15.500L18 16L32.500 1.500" />
    </svg>
  );
}

function FloppyIcon() {
  return (
    <svg viewBox="0 0 36 36" className="size-9" aria-label="💾" role="img">
      <rect width="36" height="36" rx="2" fill="#4d4d4f" />
      <rect x="9" y="0" width="18" height="13" rx="1.500" fill="#b9b9bb" />
      <rect x="20" y="1.500" width="5" height="9.500" fill="#4a4a4c" />
      <rect x="4" y="16" width="28" height="19" fill="#f4f2f2" />
      <rect x="4" y="16" width="28" height="3" fill="#6fa3d0" />
    </svg>
  );
}

function RecycleIcon() {
  return (
    <svg viewBox="0 0 36 34" className="h-[34px] w-9 shrink-0" aria-label="♻️" role="img">
      <g fill="#10b020">
        <path d="M12 2.500L18 0L24 1L28 7L31 6L27.500 14L19.500 12L22.500 10L19.500 5Z" />
        <path d="M12 2.500L17 2L20 6L14.500 13L7.500 9Z" fill="#2f9040" />
        <path d="M1 14L10 12.500L13.500 20L10.500 19L8 24L1 22L4 17Z" fill="#0f9a1d" />
        <path d="M1 22L9 24.500L15 25V32.500L6 33Z" />
        <path d="M32 15L35.500 22L31 32L23 32.500V34L17 28.500L23 23V25.500L28 25L30 23L25 18Z" />
      </g>
    </svg>
  );
}

function PlusEmoji() {
  return (
    <svg viewBox="0 0 28 28" className="size-7 shrink-0" aria-label="➕" role="img">
      <path d="M10.500 0H17.500V10.500H28V17.500H17.500V28H10.500V17.500H0V10.500H10.500Z" fill="#474747" />
    </svg>
  );
}

function FlagIcon() {
  return (
    <svg viewBox="0 0 34 24" className="h-6 w-[34px] shrink-0" aria-label="🇷🇺" role="img">
      <path d="M1 3Q9 4 17 2T33 1V8Q25 8 17 9.500T1 10Z" fill="#eef0f2" />
      <path d="M1 10Q9 11 17 9.500T33 8V15.500Q25 15.500 17 17T1 17Z" fill="#1f45b8" />
      <path d="M1 17Q9 18 17 17T33 15.500V22Q25 22 17 23.500T1 23.500Z" fill="#d8352c" />
    </svg>
  );
}

function ClockIcon({ hands, label }: { hands: string; label: string }) {
  return (
    <svg viewBox="0 0 36 36" className="size-9 shrink-0" aria-label={label} role="img">
      <circle cx="18" cy="18" r="17.500" fill="#a9aaab" />
      <circle cx="18" cy="18.500" r="16" fill="#efefee" />
      <path d={hands} fill="none" stroke="#a5a5a5" strokeWidth="2.800" strokeLinejoin="round" />
    </svg>
  );
}

function ReverseIcon() {
  return (
    <svg viewBox="0 0 36 36" className="size-9 shrink-0" aria-label="◀️" role="img">
      <defs>
        <linearGradient id="reverse" x1="0" y1="0" x2="0" y2="1">
          <stop offset="0" stopColor="#a3bdd6" />
          <stop offset="1" stopColor="#5d86b0" />
        </linearGradient>
      </defs>
      <rect width="36" height="36" rx="5" fill="url(#reverse)" />
      <path d="M8.500 18L27 7.500V28.500Z" fill="#fff" />
    </svg>
  );
}

/* ---------- phone parts ---------- */

const headerStyle = {
  compact: {
    bar: "h-[103px] pb-0.5 pl-9 pr-10",
    arrow: "size-8",
    avatar: "ml-[54px] size-20 text-[27px]",
    title: "leading-[38px] text-[35px]",
    sub: "leading-9 text-[27px]",
    dots: "h-[34px] w-[10px]",
  },
  large: {
    bar: "h-[113px] pl-[38px] pr-[42px]",
    arrow: "size-[34px]",
    avatar: "ml-14 size-[86px] text-[29px]",
    title: "leading-10 text-[37px]",
    sub: "leading-10 text-[28px]",
    dots: "h-9 w-[11px]",
  },
};

function Header({ size }: { size: Size }) {
  const s = headerStyle[size];
  return (
    <header className={`flex items-center bg-[#272d3b] text-white ${s.bar}`}>
      <button type="button" aria-label="Назад">
        <BackIcon className={s.arrow} />
      </button>
      <div className={`flex shrink-0 items-center justify-center rounded-full bg-linear-to-b from-[#f1b85f] to-[#e48340] font-medium ${s.avatar}`}>P</div>
      <div className="ml-[23px] min-w-0 flex-1">
        <h1 className={`font-medium whitespace-nowrap ${s.title}`}>post_test_bot</h1>
        <p className={`text-[#78828f] ${s.sub}`}>бот</p>
      </div>
      <button type="button" aria-label="Меню">
        <DotsIcon className={s.dots} />
      </button>
    </header>
  );
}

const composerStyle = {
  compact: {
    bar: "h-[95px] pl-[19px] pr-7",
    menu: "h-[62px] w-[76px]",
    gif: "ml-[22px] h-[42px] w-12 text-[20px]",
    input: "ml-5 text-[34px]",
    icon: "size-[43px]",
    clip: "ml-[50px] h-11 w-[39px]",
    mic: "ml-[54px] h-[47px] w-[34px]",
  },
  large: {
    bar: "h-[100px] pl-5 pr-[30px]",
    menu: "h-[65px] w-20",
    gif: "ml-[23px] h-[45px] w-[51px] text-[22px]",
    input: "ml-[21px] text-[36px]",
    icon: "size-[46px]",
    clip: "ml-[54px] h-[47px] w-[41px]",
    mic: "ml-[58px] h-[50px] w-9",
  },
};

function Composer({ size, open }: { size: Size; open?: boolean }) {
  const s = composerStyle[size];
  return (
    <form className={`flex items-center bg-[#222d3b] text-[#727f8f] ${s.bar}`}>
      <button
        type="button"
        aria-label={open ? "Закрити меню" : "Меню"}
        className={`flex shrink-0 items-center justify-center rounded-[32px] bg-[#5da8e2] text-white ${s.menu}`}
      >
        {open ? <CloseIcon className="size-[26px]" /> : <MenuIcon className="h-7 w-[34px]" />}
      </button>
      <button type="button" className={`flex shrink-0 items-center justify-center rounded-[13px] border-3 border-current font-bold ${s.gif}`}>
        GIF
      </button>
      <input
        aria-label="Повідомлення"
        placeholder="Повідомлення"
        className={`min-w-0 flex-1 bg-transparent text-white outline-none placeholder:text-[#6a7787] ${s.input}`}
      />
      <button type="button" aria-label="Клавіатура бота" className="shrink-0">
        <AppsIcon className={s.icon} />
      </button>
      <button type="button" aria-label="Прикріпити" className={`shrink-0 ${s.clip}`}>
        <ClipIcon className="size-full" />
      </button>
      <button type="button" aria-label="Голосове повідомлення" className={`shrink-0 ${s.mic}`}>
        <MicIcon className="size-full" />
      </button>
    </form>
  );
}

const replies = ["Создать постинг", "Готовый постинг", "Забрать Права", "Запрещённые слова", "Чаты/каналы", "PREMIUM"];

const keyboardStyle = {
  compact: { grid: "gap-x-5 gap-y-5 px-[29px] py-7", key: "h-20 text-[30px]" },
  large: { grid: "gap-x-[21px] gap-y-[21px] px-[30px] pt-[31px] pb-3", key: "h-[85px] text-[32px]" },
};

function ReplyKeyboard({ size }: { size: Size }) {
  const s = keyboardStyle[size];
  return (
    <div className={`grid grid-cols-2 bg-[#1d2733] ${s.grid}`}>
      {replies.map((label) => (
        <button key={label} type="button" className={`rounded-lg bg-[#293545] whitespace-nowrap text-[#f2f4f6] ${s.key}`}>
          {label}
        </button>
      ))}
    </div>
  );
}

/* ---------- messages ---------- */

function Outgoing({ text, tone }: { text: string; tone: string }) {
  return (
    <div className={`relative mr-[22px] flex h-[65px] items-center self-end rounded-[32px] rounded-br-none pr-3.5 pl-[22px] text-white ${tone}`}>
      <span className="text-[32px]">{text}</span>
      <time className="mt-5 ml-[18px] text-[25px] leading-none text-white/85">10:03</time>
      <span className="mt-5 ml-1.5 text-white/90">
        <TicksIcon />
      </span>
      <svg viewBox="0 0 12 22" className="absolute bottom-0 left-full h-[22px] w-3" aria-hidden="true">
        <path d="M-1 0Q1 16 12 20.500Q11 22 8 22H-1Z" className={tone === "bg-[#7746cf]" ? "fill-[#7746cf]" : "fill-[#7250db]"} />
      </svg>
    </div>
  );
}

function Incoming({ children, last }: { children: React.ReactNode; last?: boolean }) {
  return (
    <div className={`relative ml-[23px] flex h-[65px] items-center self-start rounded-t-[32px] bg-[#222d3a] pr-[22px] pl-[23px] text-white ${last ? "rounded-br-md" : "rounded-br-[32px]"}`}>
      <span className="flex items-center gap-2 text-[32px]">{children}</span>
      <time className="mt-5 ml-[18px] text-[25px] leading-none text-[#6d7885]">10:03</time>
      <svg viewBox="0 0 12 22" className="absolute right-full bottom-0 h-[22px] w-3 fill-[#222d3a]" aria-hidden="true">
        <path d="M13 0Q11 16 0 20.500Q1 22 4 22H13Z" />
      </svg>
    </div>
  );
}

const inlineKey = "relative flex h-[88px] items-center justify-center gap-2 bg-[#06111f]/60 text-[31px] font-medium whitespace-nowrap text-[#f4f6f8]";

function InlineKeyboard() {
  return (
    <div className="mt-[9px] ml-[23px] grid w-[78%] grid-cols-[302fr_305fr] gap-2">
      <button type="button" className={inlineKey}>
        <PlusEmoji />
        <span className="ml-1">БОТ В ЧАТ</span>
        <svg viewBox="0 0 16 16" className="absolute top-2 right-2.5 size-4 fill-none stroke-current" strokeWidth="3" aria-hidden="true">
          <path d="M8 0V16M0 8H16" />
        </svg>
      </button>
      <button type="button" className={inlineKey}>
        <PlusEmoji />
        <span className="ml-1">БОТ В КАНАЛ</span>
        <svg viewBox="0 0 16 16" className="absolute top-2 right-2 size-4 fill-none stroke-current" strokeWidth="3.200" aria-hidden="true">
          <path d="M2 1.600H14.400V13M14 2L1 15" />
        </svg>
      </button>
      <button type="button" className={inlineKey}>
        Язык: <FlagIcon />
      </button>
      <button type="button" className={inlineKey}>
        <span className="mr-2 flex">
          <ClockIcon hands="M18 5V18L21 13" label="🕐" />
          <ClockIcon hands="M18 32V18L25 22" label="🕟" />
        </span>
        <span className="whitespace-pre">MSK{"   "}UTC +3</span>
      </button>
      <button type="button" className={`col-span-2 rounded-b-[20px] ${inlineKey}`}>
        <ReverseIcon /> назад
      </button>
    </div>
  );
}

const commands = [
  { name: "перезагрузка", command: "/start" },
  { name: "настройки", command: "/settings" },
  { name: "рассылка подписчикам", command: "/mass_users" },
  { name: "все подписчики >", command: "", floppy: true },
];

function CommandSheet() {
  return (
    <section className="rounded-t-[20px] bg-[#1e2733] pt-[18px] pb-[18px]">
      <div className="mx-auto h-2 w-[46px] rounded-full bg-[#3d4552]" />
      <ul className="mt-[18px]">
        {commands.map((c) => (
          <li key={c.name}>
            <button type="button" className="flex h-[68px] w-full items-center px-[30px] text-left text-[30px] text-white">
              <span className="whitespace-nowrap">{c.name}</span>
              {c.floppy && (
                <span className="ml-2">
                  <FloppyIcon />
                </span>
              )}
              <span className="ml-auto text-[26px] text-[#7a8592]">{c.command}</span>
            </button>
          </li>
        ))}
      </ul>
    </section>
  );
}

export default function App() {
  return (
    <main
      className="grid min-h-screen grid-cols-[624fr_122fr_668fr] items-start overflow-hidden bg-[#262c3a]"
      style={{ fontFamily: 'Roboto, "Noto Sans", sans-serif' }}
    >
      <section className="col-span-2 col-start-1 row-start-1">
        <Header size="compact" />
        <div className="relative h-[699px] overflow-hidden bg-linear-to-r from-[#121a2c] via-[#0f1720] via-50% to-[#0e141a]">
          <Wallpaper />
        </div>
        <div className="relative bg-[#0e1622]">
          <CommandSheet />
        </div>
        <Composer size="compact" open />
        <ReplyKeyboard size="compact" />
        <div className="flex h-[30px] items-center justify-center bg-[#171d26]">
          <div className="h-2 w-[276px] rounded-full bg-white" />
        </div>
      </section>

      <section className="relative z-10 col-span-2 col-start-2 row-start-1 mt-[353px]">
        <Header size="large" />
        <div className="relative h-[1094px] overflow-hidden bg-linear-to-br from-[#0c141a] via-[#101823] via-50% to-[#15222d]">
          <Wallpaper />
          <div className="relative flex h-full flex-col justify-end pb-[15px]">
            <div className="ml-[355px] size-[76px] rounded-full bg-[#06121a]/60">
              <svg viewBox="0 0 76 76" className="size-full fill-none stroke-white" strokeWidth="5.500" strokeLinecap="round" role="img" aria-label="Завантаження">
                <path d="M10.500 36A27.500 27.500 0 0 1 62.500 24" />
              </svg>
            </div>
            <div className="mt-[18px] flex h-[42px] items-center self-center rounded-full bg-[#0a1220]/70 px-4 text-[28px] font-medium text-white">14 серпня</div>
            <div className="mt-4 flex flex-col gap-[13px]">
              <Outgoing text="/start" tone="bg-[#7746cf]" />
              <Incoming>
                <RecycleIcon /> Бот перезапущен
              </Incoming>
              <Outgoing text="/settings" tone="bg-[#7250db]" />
              <Incoming last>ГЛАВНЫЕ НАСТРОЙКИ</Incoming>
            </div>
            <InlineKeyboard />
          </div>
        </div>
        <Composer size="large" />
        <ReplyKeyboard size="large" />
      </section>
    </main>
  );
}
